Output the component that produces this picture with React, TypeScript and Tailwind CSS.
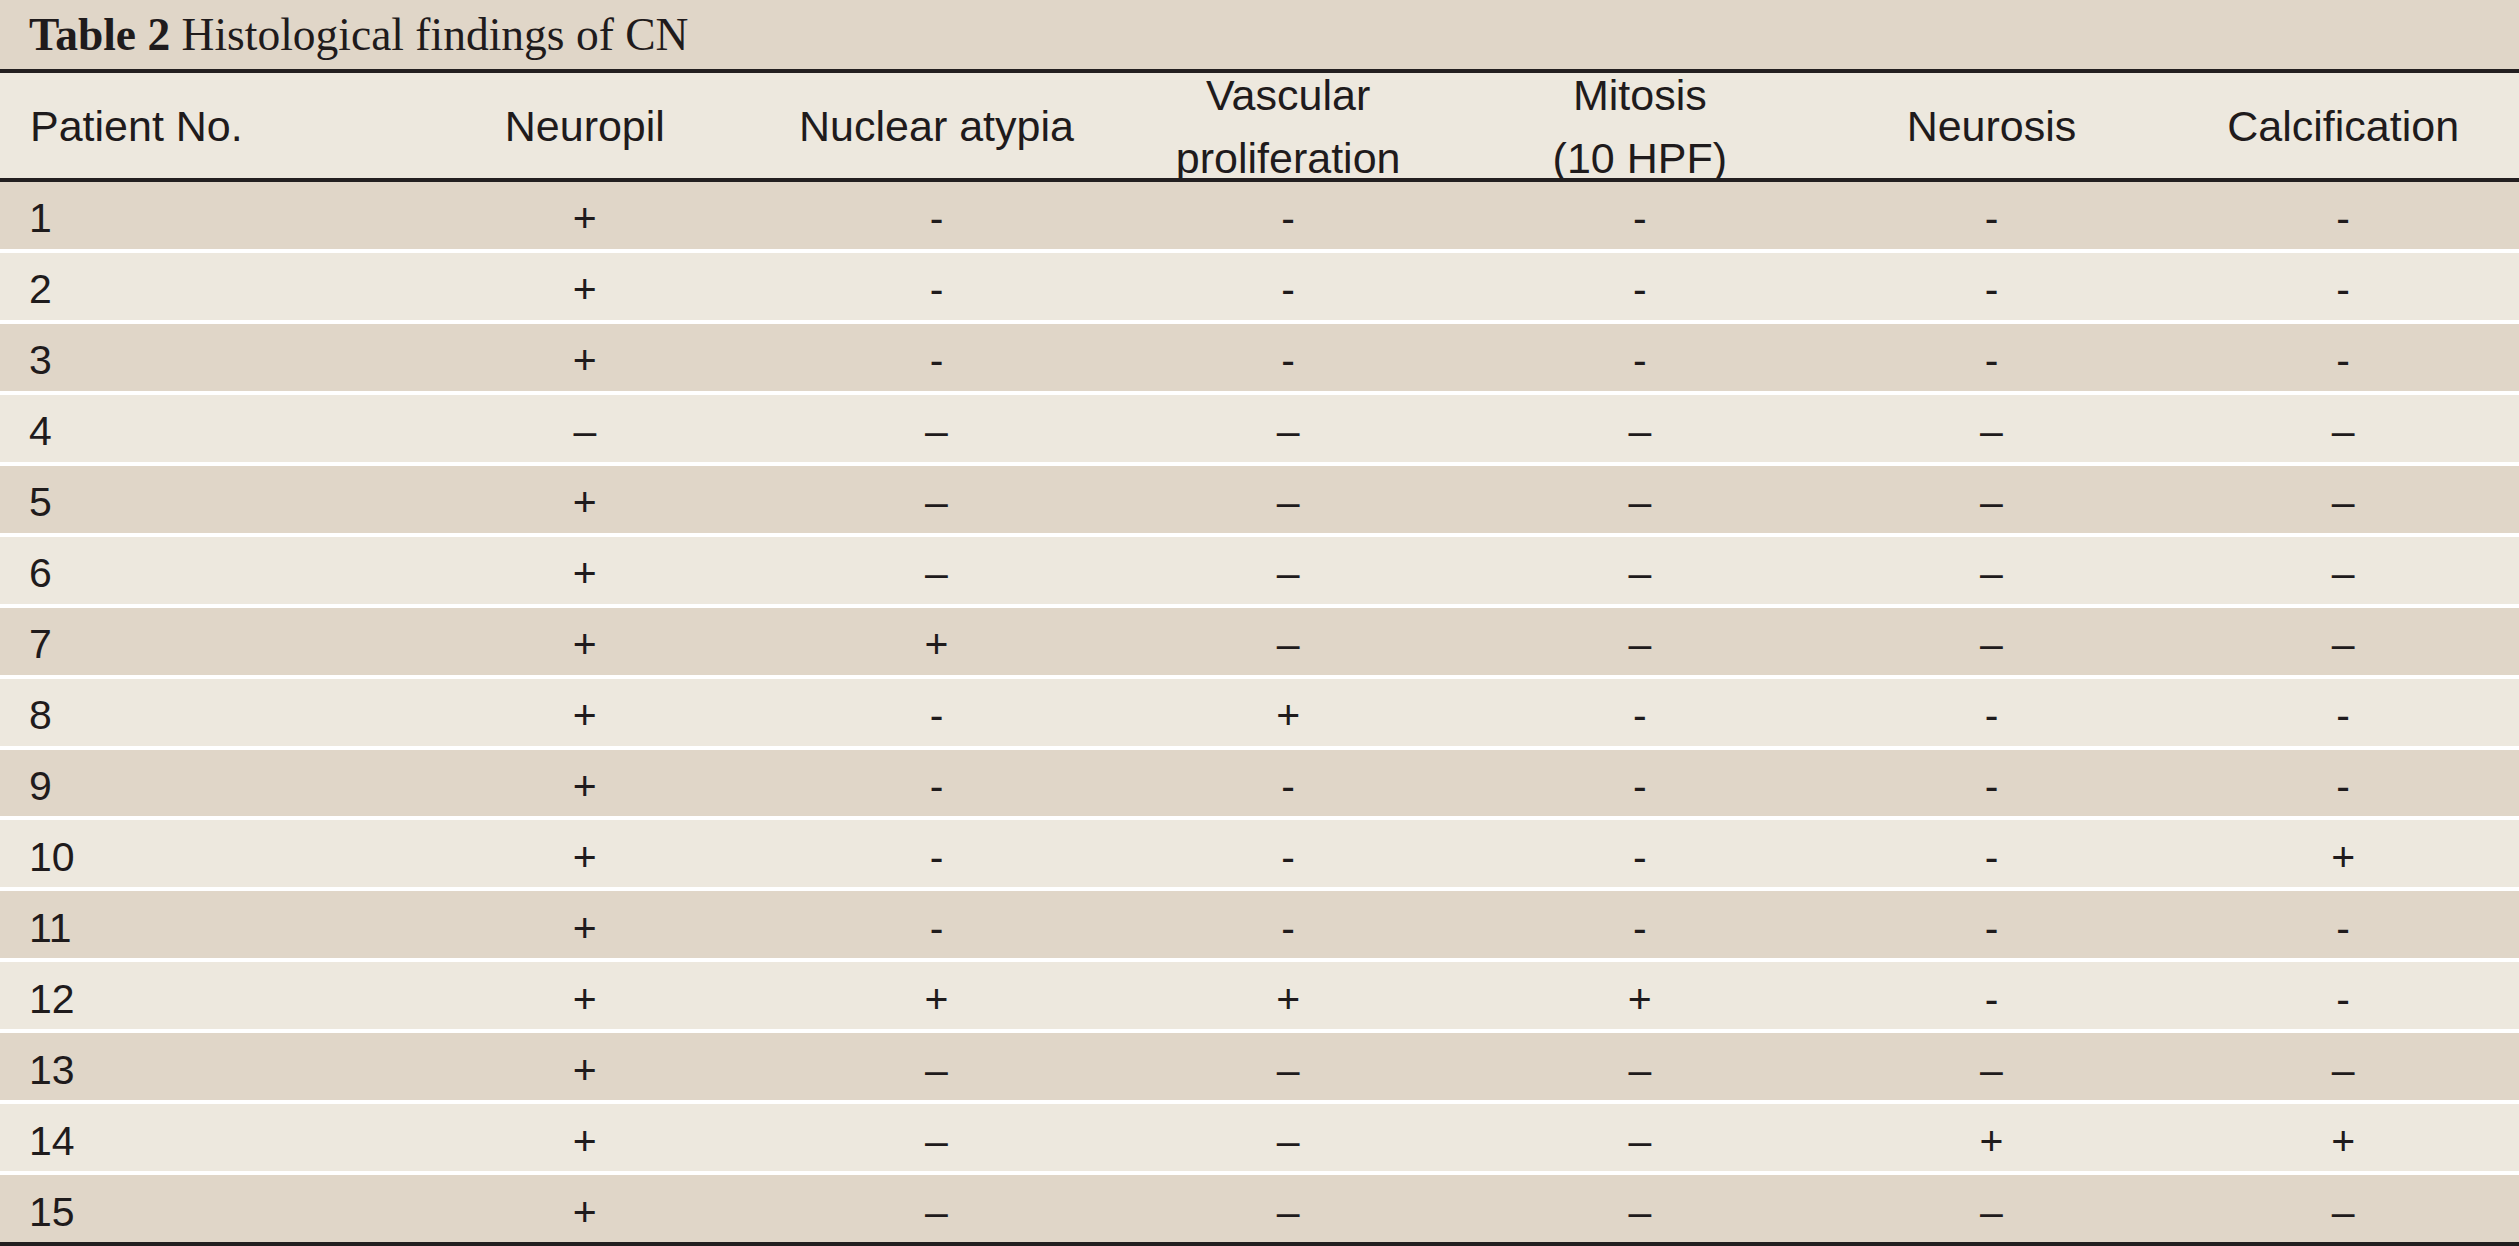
const headers: string[][] = [
  ["Neuropil"],
  ["Nuclear atypia"],
  ["Vascular", "proliferation"],
  ["Mitosis", "(10 HPF)"],
  ["Neurosis"],
  ["Calcification"],
];

const H = "-";
const D = "\u2013";

// one entry per patient: the six findings in header order
const rows: string[][] = [
  ["+", H, H, H, H, H],
  ["+", H, H, H, H, H],
  ["+", H, H, H, H, H],
  [D, D, D, D, D, D],
  ["+", D, D, D, D, D],
  ["+", D, D, D, D, D],
  ["+", "+", D, D, D, D],
  ["+", H, "+", H, H, H],
  ["+", H, H, H, H, H],
  ["+", H, H, H, H, "+"],
  ["+", H, H, H, H, H],
  ["+", "+", "+", "+", H, H],
  ["+", D, D, D, D, D],
  ["+", D, D, D, "+", "+"],
  ["+", D, D, D, D, D],
];

const sans = "font-['Liberation_Sans',Arial,sans-serif]";

export default function App() {
  return (
    <div className="w-[2519px] h-[1246px] flex flex-col bg-white text-[#1f1b1c]">
      <div className="h-[69px] shrink-0 flex items-center pl-[29px] bg-[#e0d6c8] font-['Liberation_Serif','Times_New_Roman',serif] text-[45.5px] leading-none">
        <span className="font-bold">Table 2</span>
        <span>&nbsp;Histological findings of CN</span>
      </div>
      <div className="h-[4px] shrink-0 bg-[#231f20]" />

      <div
        className={`h-[105px] shrink-0 grid grid-cols-[409px_repeat(6,1fr)] grid-rows-[105px] items-center bg-[#ede8de] ${sans} text-[43px] leading-[63px]`}
      >
        <div className="pl-[30px] pt-[2px]">Patient No.</div>
        {headers.map((lines) => (
          <div key={lines[0]} className="flex flex-col items-center pt-[2px]">
            {lines.map((l) => (
              <span key={l} className="whitespace-nowrap">
                {l}
              </span>
            ))}
          </div>
        ))}
      </div>
      <div className="h-[4px] shrink-0 bg-[#231f20]" />

      <div className={`flex-1 min-h-0 flex flex-col gap-[4px] bg-white ${sans} text-[41px] leading-[50px]`}>
        {rows.map((cells, i) => (
          <div
            key={i}
            className={`flex-1 min-h-0 grid grid-cols-[409px_repeat(6,1fr)] items-center ${
              i % 2 === 0 ? "bg-[#e0d6c8]" : "bg-[#ede8de]"
            }`}
          >
            <div className="pl-[29px] pt-[6px]">{i + 1}</div>
            {cells.map((c, j) => (
              <div key={j} className="text-center pt-[6px]">
                {c}
              </div>
            ))}
          </div>
        ))}
      </div>
      <div className="h-[4px] shrink-0 bg-[#231f20]" />
    </div>
  );
}
